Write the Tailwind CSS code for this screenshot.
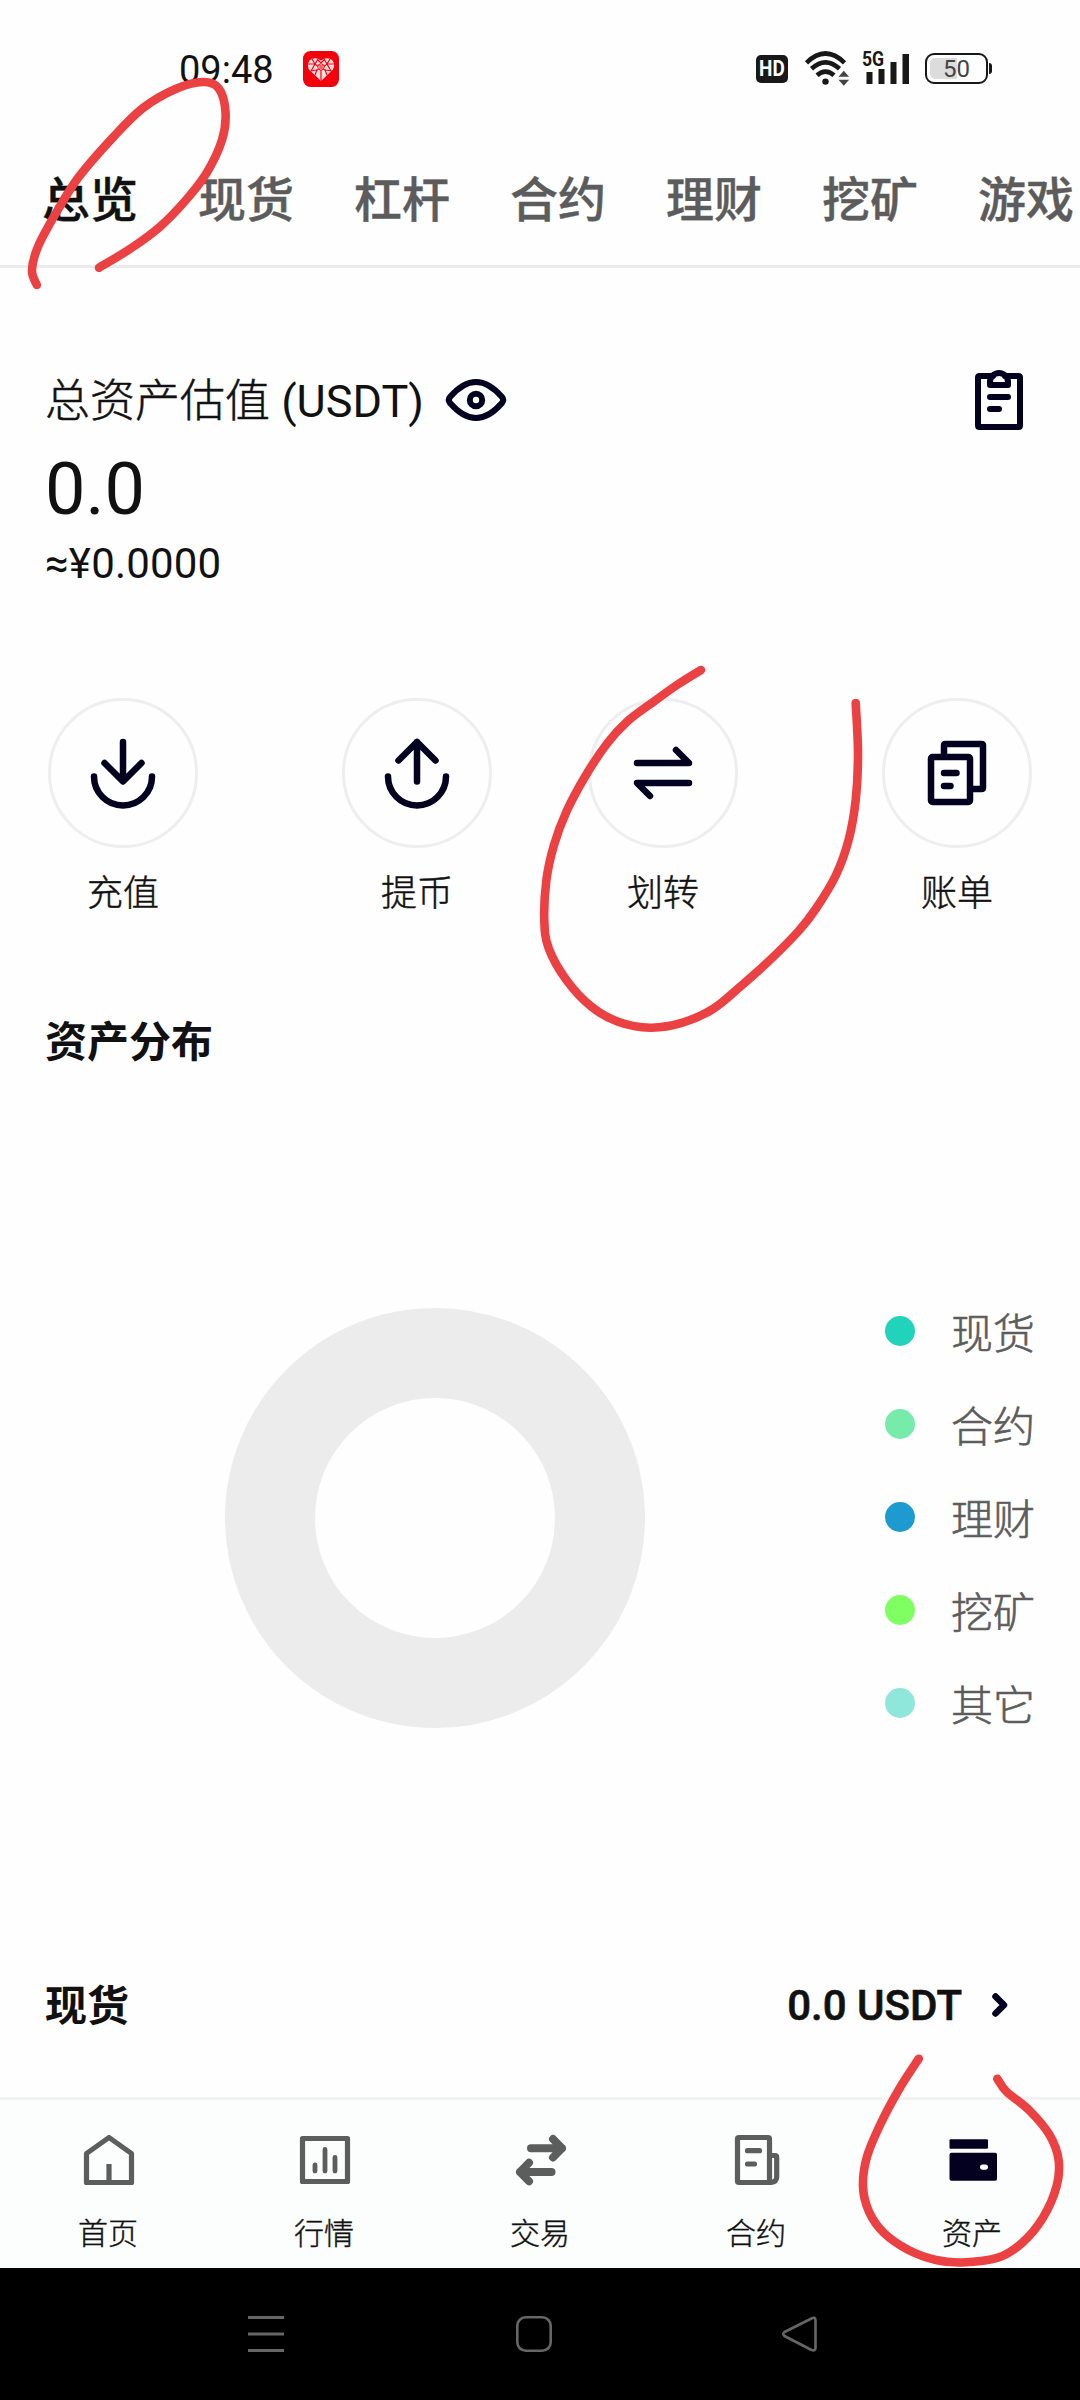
<!DOCTYPE html>
<html lang="zh-CN">
<head>
<meta charset="utf-8">
<title>资产总览</title>
<script src="https://cdn.jsdelivr.net/npm/@tailwindcss/browser@4"></script>
</head>
<body class="relative w-[1080px] h-[2400px] overflow-hidden bg-[#fefefe] text-[#111] font-['Roboto','Noto_Sans_CJK_SC',sans-serif]">

<!-- Status bar -->
<header class="flex h-[137px] items-center pl-[179px] pr-[88px]">
  <span class="w-[97px] text-[38px] leading-[44px] mt-0.5">09:48</span>
  <svg class="ml-[27px] w-9 h-9" viewBox="0 0 36 36">
    <rect width="36" height="36" rx="7.5" fill="#f3000c"/>
    <path d="M18 30 L6 18.5 Q3.500 14 6.500 9.500 Q11.500 5 18 9.500 Q24.500 5 29.500 9.500 Q32.500 14 30 18.500Z" fill="#fff" fill-opacity=".88"/>
    <path d="M5 13h7l6 5 6-5h7M9 8l3 5-4 7M27 8l-3 5 4 7M12 13l3-5M24 13l-3-5M18 18v12M8 20l10-2 10 2M12 24l2-5M24 24l-2-5M15 9l3 3 3-3" fill="none" stroke="#f3000c" stroke-width="1.2"/>
    <circle cx="18" cy="16" r="3.200" fill="#fff" stroke="#f3000c"/>
    <path d="M16 15h4M16 17h4M17.200 14v4M19 14v4" stroke="#f3000c" stroke-width=".7"/>
  </svg>
  <div class="ml-auto flex items-center">
    <div class="flex h-7 w-8 items-center justify-center rounded-[5px] bg-[#181818] text-[22px] leading-7 font-bold text-white"><span class="scale-x-[.86]">HD</span></div>
    <svg class="ml-4 w-[46px] h-9" viewBox="803 49.7 46 36">
      <g fill="none" stroke="#181818" stroke-width="4.600">
        <path d="M805.500 61.500Q824.500 43 843.500 61.500"/>
        <path d="M810.500 67.500Q824.500 54.500 838.500 67.500"/>
        <path d="M816 74Q824.500 66.500 833 74"/>
      </g>
      <circle cx="824.500" cy="80.300" r="3.200" fill="#181818"/>
      <path d="M837.500 75.500l5.300-6 5.300 6zM837.500 78.500l5.300 6 5.300-6z" fill="#444"/>
    </svg>
    <div class="relative ml-3 h-9 w-[48px]">
      <svg class="h-9 w-12" viewBox="861 50 48 36"><path d="M865.500 71h6v12h-6zM877.500 68h6v15h-6zM889.500 61h6v22h-6zM901.500 53h6.500v30h-6.500z" fill="#181818"/></svg>
      <span class="absolute left-0 -top-0.5 origin-left scale-x-[.84] text-[21px] leading-5 font-bold text-[#181818]">5G</span>
    </div>
    <div class="ml-[15px] flex items-center">
      <div class="relative flex h-[31px] w-[63px] items-center justify-center rounded-[9px] border-2 border-[#181818] text-[24px] leading-7 text-[#444]">
        <div class="absolute left-[3px] top-[3px] h-[21px] w-[27px] rounded-l-[5px] bg-[#dcdcdc]"></div>
        <span class="relative">50</span>
      </div>
      <div class="ml-px h-[11px] w-[3px] rounded-r bg-[#181818]"></div>
    </div>
  </div>
</header>

<!-- Account tabs -->
<nav class="flex h-[131px] items-center gap-[60px] border-b-[3px] border-[#ebebeb] pl-[42px] text-[48px] leading-[60px] font-medium whitespace-nowrap text-[#5c5c5c] [-webkit-text-stroke:0.4px]">
  <span class="text-[#111]">总览</span><span>现货</span><span>杠杆</span><span>合约</span><span>理财</span><span>挖矿</span><span>游戏</span>
</nav>

<main class="flex h-[1829px] flex-col px-[45px]">
  <section class="mt-[102px]">
    <div class="flex h-[60px] items-center">
      <span class="pt-1 text-[45px] leading-[54px]"><span class="font-light [-webkit-text-stroke:0.5px]">总资产估值</span> (USDT)</span>
      <svg class="ml-[19px] h-[60px] w-[66px]" viewBox="443 370 66 60" fill="none" stroke="#04001f" stroke-width="6">
        <path d="M450 403Q447.500 400 450 397Q476 367 502 397Q504.500 400 502 403Q476 433 450 403Z"/>
        <circle cx="476" cy="400" r="6.200"/>
      </svg>
      <svg class="ml-auto mr-3 h-[60px] w-[48px]" viewBox="975 370 48 60" fill="none" stroke="#04001f" stroke-width="6" stroke-linejoin="round" stroke-linecap="round">
        <path d="M993 376H979.500Q978 376 978 377.500V425.500Q978 427 979.500 427H1018.500Q1020 427 1020 425.500V377.500Q1020 376 1018.500 376H1005"/>
        <path d="M990 385V382A9 9 0 0 1 1008 382V385ZM990 397H1008M990 409H999"/>
      </svg>
    </div>
    <p class="mt-[18px] text-[72px] leading-[84px]">0.0</p>
    <p class="mt-[7px] text-[42px] leading-[50px] tracking-[0.2px]">≈¥0.0000</p>
  </section>

  <!-- Quick actions -->
  <section class="mt-[109px] ml-[3px] flex text-center text-[36px] leading-[42px] font-light [-webkit-text-stroke:0.45px]">
    <div class="w-[150px]">
      <div class="h-[150px] rounded-full border-[3px] border-[#eee]">
        <svg class="size-36" viewBox="51 701 144 144" fill="none" stroke="#04001f" stroke-width="6.500" stroke-linecap="round" stroke-linejoin="round"><path d="M123 742V781M104.500 763L123 781.500L141.500 763M94 776.500A29 29 0 0 0 152 776.500"/></svg>
      </div>
      <p class="mt-[25px]">充值</p>
    </div>
    <div class="ml-36 w-[150px]">
      <div class="h-[150px] rounded-full border-[3px] border-[#eee]">
        <svg class="size-36" viewBox="345 701 144 144" fill="none" stroke="#04001f" stroke-width="6.500" stroke-linecap="round" stroke-linejoin="round"><path d="M417 742V781.500M398.500 760.500L417 742L435.500 760.500M388 776.500A29 29 0 0 0 446 776.500"/></svg>
      </div>
      <p class="mt-[25px]">提币</p>
    </div>
    <div class="ml-24 w-[150px]">
      <div class="h-[150px] rounded-full border-[3px] border-[#eee]">
        <svg class="size-36" viewBox="591 701 144 144" fill="none" stroke="#04001f" stroke-width="6.500" stroke-linecap="round" stroke-linejoin="round"><path d="M637 763H689L676 750M689 783H637L650 796"/></svg>
      </div>
      <p class="mt-[25px]">划转</p>
    </div>
    <div class="ml-36 w-[150px]">
      <div class="h-[150px] rounded-full border-[3px] border-[#eee]">
        <svg class="size-36" viewBox="885 701 144 144" fill="none" stroke="#04001f" stroke-width="6.500" stroke-linejoin="round" stroke-linecap="round"><path d="M944 756V745.500Q944 744 945.500 744H981.500Q983 744 983 745.500V787.500Q983 789 981.500 789H971" stroke-linecap="butt"/><rect x="931" y="757" width="39" height="45" rx="1.500"/><path d="M944 773H956.500M944 786H950.500"/></svg>
      </div>
      <p class="mt-[25px]">账单</p>
    </div>
  </section>

  <h2 class="mt-[103px] text-[42px] leading-[50px] font-bold">资产分布</h2>

  <!-- Distribution chart and legend -->
  <section class="mt-[217px] flex h-[466px] items-center pl-[180px]">
    <div class="size-[420px] rounded-full border-[90px] border-[#ececec]"></div>
    <ul class="ml-60 h-[468px] text-[42px] leading-[50px] font-light text-[#5c5c5c] [-webkit-text-stroke:0.6px]">
      <li class="flex h-[93px] items-center gap-9"><i class="size-[30px] rounded-full bg-[#20d3ba]"></i><span class="pt-2">现货</span></li>
      <li class="flex h-[93px] items-center gap-9"><i class="size-[30px] rounded-full bg-[#76ebaa]"></i><span class="pt-2">合约</span></li>
      <li class="flex h-[93px] items-center gap-9"><i class="size-[30px] rounded-full bg-[#1d9ad0]"></i><span class="pt-2">理财</span></li>
      <li class="flex h-[93px] items-center gap-9"><i class="size-[30px] rounded-full bg-[#80ff63]"></i><span class="pt-2">挖矿</span></li>
      <li class="flex h-[93px] items-center gap-9"><i class="size-[30px] rounded-full bg-[#8fe7dc]"></i><span class="pt-2">其它</span></li>
    </ul>
  </section>

  <section class="mt-[231px] flex h-[50px] items-center text-[42px] leading-[50px]">
    <h2 class="font-bold">现货</h2>
    <span class="ml-auto -mt-[3px] font-medium [-webkit-text-stroke:0.6px]">0.0 USDT</span>
    <svg class="ml-[28px] mr-[25px] -mt-[5px] h-[30px] w-5" viewBox="990 1989 20 30" fill="none" stroke="#04001f" stroke-width="6.500" stroke-linecap="round" stroke-linejoin="round"><path d="M995.500 1995.500L1004 2004L995.500 2012.500"/></svg>
  </section>
</main>

<!-- App navigation -->
<nav class="grid h-[171px] grid-cols-5 border-t-[3px] border-[#f1f2f2] bg-[#fcfefd] pt-[30px] text-center text-[30px] leading-9 font-light [-webkit-text-stroke:0.4px]">
  <div class="flex flex-col items-center gap-[26px]">
    <svg class="size-[60px]" viewBox="78 2130 60 60" fill="none" stroke="#5c5e5d" stroke-width="5.200" stroke-linejoin="round"><path d="M86.500 2153.500L109 2137.500L131.500 2153.500V2182.500H86.500ZM109 2164V2182"/></svg>
    <span>首页</span>
  </div>
  <div class="flex flex-col items-center gap-[26px]">
    <svg class="size-[60px]" viewBox="294 2130 60 60" fill="none" stroke="#5c5e5d" stroke-width="5.200" stroke-linejoin="round" stroke-linecap="round"><path d="M302.500 2138.500H347.500V2181.500H302.500Z"/><path stroke-width="4.800" d="M315 2165V2171M325 2149.500V2171M335 2157.500V2171"/></svg>
    <span>行情</span>
  </div>
  <div class="flex flex-col items-center gap-[26px]">
    <svg class="size-[60px]" viewBox="510 2130 60 60" fill="none" stroke="#5c5e5d" stroke-width="8" stroke-linejoin="round" stroke-linecap="round"><path d="M531 2148.300H562M553 2139L562 2148.300L553 2157.500M551.500 2172H520M529 2162.700L520 2172L529 2181.300"/></svg>
    <span>交易</span>
  </div>
  <div class="flex flex-col items-center gap-[26px]">
    <svg class="size-[60px]" viewBox="726 2130 60 60" fill="none" stroke="#5c5e5d" stroke-width="5.200" stroke-linejoin="round" stroke-linecap="round"><path d="M769.500 2182.500H739Q737.500 2182.500 737.500 2181V2139Q737.500 2137.500 739 2137.500H768Q769.500 2137.500 769.500 2139ZM770 2155.500H775Q776.700 2155.500 776.700 2157V2177Q776.500 2182 771 2182.500M747.500 2150.700H759.500M747.500 2164H754.500"/></svg>
    <span>合约</span>
  </div>
  <div class="flex flex-col items-center gap-[26px]">
    <svg class="size-[60px]" viewBox="942 2130 60 60"><rect x="949.500" y="2139.300" width="38.500" height="9.500" rx="1.200" fill="#04001f"/><rect x="949.500" y="2152.700" width="47.500" height="28" rx="1.800" fill="#04001f"/><rect x="980" y="2164.500" width="8" height="5.200" rx="2.600" fill="#fff"/></svg>
    <span>资产</span>
  </div>
</nav>

<!-- System navigation -->
<footer class="flex h-[132px] items-center bg-black pl-[246px]">
  <svg class="h-10 w-10" viewBox="246 2314 40 40" stroke="#666" stroke-width="3"><path d="M248 2317.500H284M248 2334H284M248 2350.500H284"/></svg>
  <svg class="ml-[228px] h-10 w-10" viewBox="514 2314 40 40" fill="none" stroke="#666" stroke-width="2.600"><rect x="517.300" y="2317.300" width="33.400" height="33.400" rx="8.500"/></svg>
  <svg class="ml-[226px] h-10 w-10" viewBox="780 2314 40 40" fill="none" stroke="#666" stroke-width="2.600" stroke-linejoin="round"><path d="M784.500 2332Q782 2334 784.500 2336L811.500 2350Q815.500 2351.500 815.500 2347.500V2320.500Q815.500 2316.500 811.500 2318.500Z"/></svg>
</footer>

<!-- Freehand marks over the page -->
<svg id="ink" class="absolute left-0 top-0 h-[2400px] w-[1080px]" viewBox="0 0 1080 2400" fill="none" stroke="#ec4142" stroke-width="8.600" stroke-linecap="round" stroke-linejoin="round"></svg>
<script>
const marks = [
  [[36.8,285],[32,270.7],[38,246.7],[56.8,211.7],[79,176.7],[113.6,136.7],[143,108],[175.6,89],[203,82],[218.7,88.3],[225.5,112],[222,140],[206.6,173],[186,200],[160,226.7],[131,248.3],[99,267.7]],
  [[701,670],[677.7,684.5],[653.6,701.7],[627,721.7],[607.5,743],[586,775],[566.4,811.7],[554,845],[546.4,880],[544.3,920],[548.6,948],[566.4,980],[591.4,1006.7],[618,1021.7],[650.4,1027.7],[682.5,1022.7],[712.9,1009],[741,986],[770,960],[798.6,931],[816.4,908],[836,875],[848.6,840],[855.7,800],[858,753],[855.7,703]],
  [[918.8,2058.7],[899.8,2088],[881,2123],[867,2156.7],[863,2186.7],[869,2211.7],[884,2233],[908.5,2250],[936,2260],[962,2262.5],[998,2257.7],[1022,2243],[1042.8,2218],[1056.5,2186.7],[1058.6,2160],[1049.6,2135],[1029,2110],[1006.6,2091.7],[997.3,2078.7]]
];
// Catmull-Rom spline through each point list
for (const p of marks) {
  let d = `M${p[0]}`;
  for (let i = 0; i < p.length - 1; i++) {
    const a = p[i - 1] || p[i], b = p[i], c = p[i + 1], e = p[i + 2] || c;
    d += `C${b[0] + (c[0] - a[0]) / 6} ${b[1] + (c[1] - a[1]) / 6} ${c[0] - (e[0] - b[0]) / 6} ${c[1] - (e[1] - b[1]) / 6} ${c[0]} ${c[1]}`;
  }
  const path = document.createElementNS('http://www.w3.org/2000/svg', 'path');
  path.setAttribute('d', d);
  document.getElementById('ink').appendChild(path);
}
</script>
</body>
</html>
